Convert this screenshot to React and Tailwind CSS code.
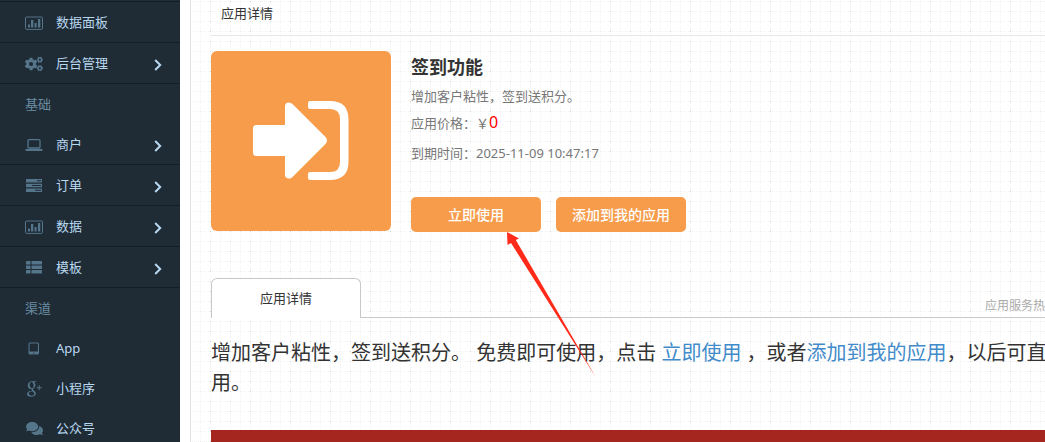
import { FaCogs, FaComments } from "react-icons/fa";

const ChartIcon = () => (
  <svg viewBox="0 0 18 14" className="h-[14px] w-[18px]" fill="currentColor" aria-hidden="true">
    <rect x="0.5" y="1" width="17" height="12.4" rx="1" fill="none" stroke="currentColor" />
    <path d="M3 8.6h2v3H3zM6 4h2.3v7.6H6zM9.6 7h2v4.6h-2zM13 3h2.3v8.6H13z" />
  </svg>
);
const LaptopIcon = () => (
  <svg viewBox="0 0 18 14" className="h-[14px] w-[18px]" fill="currentColor" aria-hidden="true">
    <rect x="3" y="1.6" width="12" height="8.4" rx="1" fill="none" stroke="currentColor" strokeWidth="1.3" />
    <path d="M0.5 11h17v.9q0 1.200-1.6 1.200H2q-1.500 0-1.500-1.200z" />
  </svg>
);
const TasksIcon = () => (
  <svg viewBox="0 0 16 13" className="h-[13px] w-[16px]" fill="currentColor" fillRule="evenodd" aria-hidden="true">
    <path d="M0 0h16v3.500H0zM11 1.200h4v1h-4zM0 4.700h16v3.500H0zM6 6h9v1H6zM0 9.400h16v3.500H0zM9 10.700h6v1H9z" />
  </svg>
);
const ListIcon = () => (
  <svg viewBox="0 0 16 13" className="h-[13px] w-[16px]" fill="currentColor" aria-hidden="true">
    {[0, 4.5, 9].map((y) => (
      <g key={y}>
        <rect y={y} width="4.500" height="3.500" rx=".6" />
        <rect x="5.500" y={y} width="10.500" height="3.500" rx=".6" />
      </g>
    ))}
  </svg>
);
const TabletIcon = () => (
  <svg viewBox="0 0 12 13" className="h-[13px] w-[12px]" fill="currentColor" fillRule="evenodd" aria-hidden="true">
    <path d="M2 .5h7.500q1.500 0 1.500 1.500v9q0 1.500-1.500 1.500H2Q.5 12.500.5 11V2Q.5.500 2 .5zM2 1.500q-.4 0-.4.4v7.600h8.300V1.900q0-.4-.4-.4zM5.200 10.700h1.200v1H5.200z" />
  </svg>
);
const GooglePlusIcon = () => (
  <svg viewBox="0 0 16 16" className="h-[16px] w-[16px]" fill="currentColor" fillRule="evenodd" aria-hidden="true">
    <path d="M5.800.3H10.600L9.200 1.200H7.900Q9.500 2.400 9.500 4.300 9.500 6 8 7.100 7 7.900 7 8.400 7 8.900 8.100 9.700 9.900 11 9.900 12.300 9.900 15.700 5.200 15.700 1 15.700 1 13 1 9.900 6 9.700 5.300 9 5.600 8.100 1.800 8.300 1.800 4.600 1.800.800 5.800.3zM5.400 1.100Q3.400 1.300 3.600 4 4.200 7.300 6.100 7.300 7.900 7 7.700 4.800 7.200 1.400 5.400 1.100zM6.300 10.300Q2.800 10.500 2.800 12.600 2.900 14.700 5.700 14.800 8.400 14.700 8.300 12.700 8.200 11.600 6.300 10.300z" />
    <path d="M10.700 6.300h2v-2h1v2h2v1h-2v2h-1v-2h-2z" />
  </svg>
);
const Chevron = () => (
  <svg viewBox="0 0 8 12" className="h-3 w-2 translate-y-px text-[#b8d8f0]" fill="none" stroke="currentColor" strokeWidth="2" aria-hidden="true">
    <path d="M1.200 1 6.200 6l-5 5" />
  </svg>
);
const CogsIcon = () => <FaCogs size={18} />;
const CommentsIcon = () => <FaComments size={17} />;

function Item({ icon: Icon, label, chevron, plain }) {
  return (
    <li className={plain ? "h-10" : "h-[41px] border-b border-[#151e25]"}>
      <a href="#" className="flex h-full items-center pt-px pr-[18px] pl-[25px] text-[13px] text-[#b8d8f0]">
        <span className="mr-[13px] flex w-[18px] justify-center text-[#54758a]"><Icon /></span>
        <span className="flex-1">{label}</span>
        {chevron && <Chevron />}
      </a>
    </li>
  );
}

const Heading = ({ children }) => (
  <li className="flex h-10 items-center pt-px pl-[25px] text-[13px] text-[#6a8da3]">{children}</li>
);

export default function App() {
  return (
    <div className="flex h-screen overflow-hidden bg-white font-['Noto_Sans','Noto_Sans_CJK_SC',sans-serif] text-[#333]">
      <nav className="w-[180px] shrink-0 overflow-hidden bg-[#1f2b35]">
        <ul className="mt-px border-t border-[#151e25]">
          <Item icon={ChartIcon} label="数据面板" />
          <Item icon={CogsIcon} label="后台管理" chevron />
          <Heading>基础</Heading>
          <Item icon={LaptopIcon} label="商户" chevron />
          <Item icon={TasksIcon} label="订单" chevron />
          <Item icon={ChartIcon} label="数据" chevron />
          <Item icon={ListIcon} label="模板" chevron />
          <Heading>渠道</Heading>
          <Item icon={TabletIcon} label="App" plain />
          <Item icon={GooglePlusIcon} label="小程序" plain />
          <Item icon={CommentsIcon} label="公众号" plain />
        </ul>
      </nav>

      <main className="relative ml-[10px] min-w-0 flex-1 overflow-hidden border-l border-[#e3e3e3] bg-[conic-gradient(at_1px_1px,transparent_75%,#cfcfcf_0),conic-gradient(at_1px_1px,transparent_75%,#e4e4e4_0),conic-gradient(at_1px_1px,transparent_75%,#f5f5f5_0),conic-gradient(at_1px_1px,transparent_75%,#f5f5f5_0)] bg-[size:20px_10px,10px_10px,2px_10px,10px_2px] bg-[position:19px_1px,9px_1px,1px_1px,9px_1px] pl-5">
        <h1 className="h-9 border-b border-[#e6e6e6] pl-[10px] text-[13px] leading-[26px]">应用详情</h1>

        <section className="mt-[15px] flex gap-5">
          <div className="flex size-[180px] shrink-0 items-center justify-center rounded-md bg-[#f79c4b] pb-[3px]">
            <svg viewBox="0 0 96 80" className="h-20 w-24" fill="#fff" aria-hidden="true">
              <path d="M3.500 25H32V6.500q0-4 4-4 2 0 3.500 1.500l33 33q3 3.500 0 7l-33 33Q38 78.500 36 78.500q-4 0-4-4V56H3.500Q0 56 0 52.500v-24Q0 25 3.500 25z" />
              <path d="M57 1h20q18.500 0 18.500 18.500v42Q95.500 80 77 80H57q-2 0-2-2v-4q0-2 2-2h20q10 0 10-10V19Q87 9 77 9H57q-2 0-2-2V3q0-2 2-2z" />
            </svg>
          </div>
          <div className="text-[13px] leading-[26px] text-[#777]">
            <h2 className="text-lg leading-8 font-bold text-[#333]">签到功能</h2>
            <p>增加客户粘性，签到送积分。</p>
            <p>应用价格：￥<span className="text-base leading-[26px] text-[#f00]">0</span></p>
            <p className="mt-1">到期时间：2025-11-09 10:47:17</p>
            <div className="mt-[31px] flex gap-[15px] text-sm font-medium text-white">
              <button type="button" className="h-[35px] w-[130px] rounded-[5px] bg-[#f79c4b]">立即使用</button>
              <button type="button" className="h-[35px] w-[130px] rounded-[5px] bg-[#f79c4b]">添加到我的应用</button>
            </div>
          </div>
        </section>

        <div className="mt-[46px] flex h-10 items-stretch">
          <button type="button" className="w-[150px] shrink-0 rounded-t-md border border-b-0 border-[#c8c8c8] bg-white text-[13px]">应用详情</button>
          <div className="flex min-w-0 flex-1 justify-end overflow-hidden border-b border-[#c8c8c8]">
            <span className="w-[60px] pt-[18px] text-xs leading-5 whitespace-nowrap text-[#aaa]">应用服务热线</span>
          </div>
        </div>

        <p className="mt-5 -mr-[55px] text-xl leading-[30px]">
          增加客户粘性，签到送积分。 免费即可使用，点击 <a href="#" className="text-[#428bca]">立即使用</a> ，或者<a href="#" className="text-[#428bca]">添加到我的应用</a>，以后可直接使用。
        </p>
        <div className="mt-8 h-10 bg-[#a5261f]" />

        <svg viewBox="0 0 90 146" className="pointer-events-none absolute top-[232px] left-[316px] h-[146px] w-[90px]" aria-hidden="true">
          <path d="M0 0 12 6.500 8.800 8 89 145.500 4 11 .5 13z" fill="#ff2a1a" />
        </svg>
      </main>
    </div>
  );
}
